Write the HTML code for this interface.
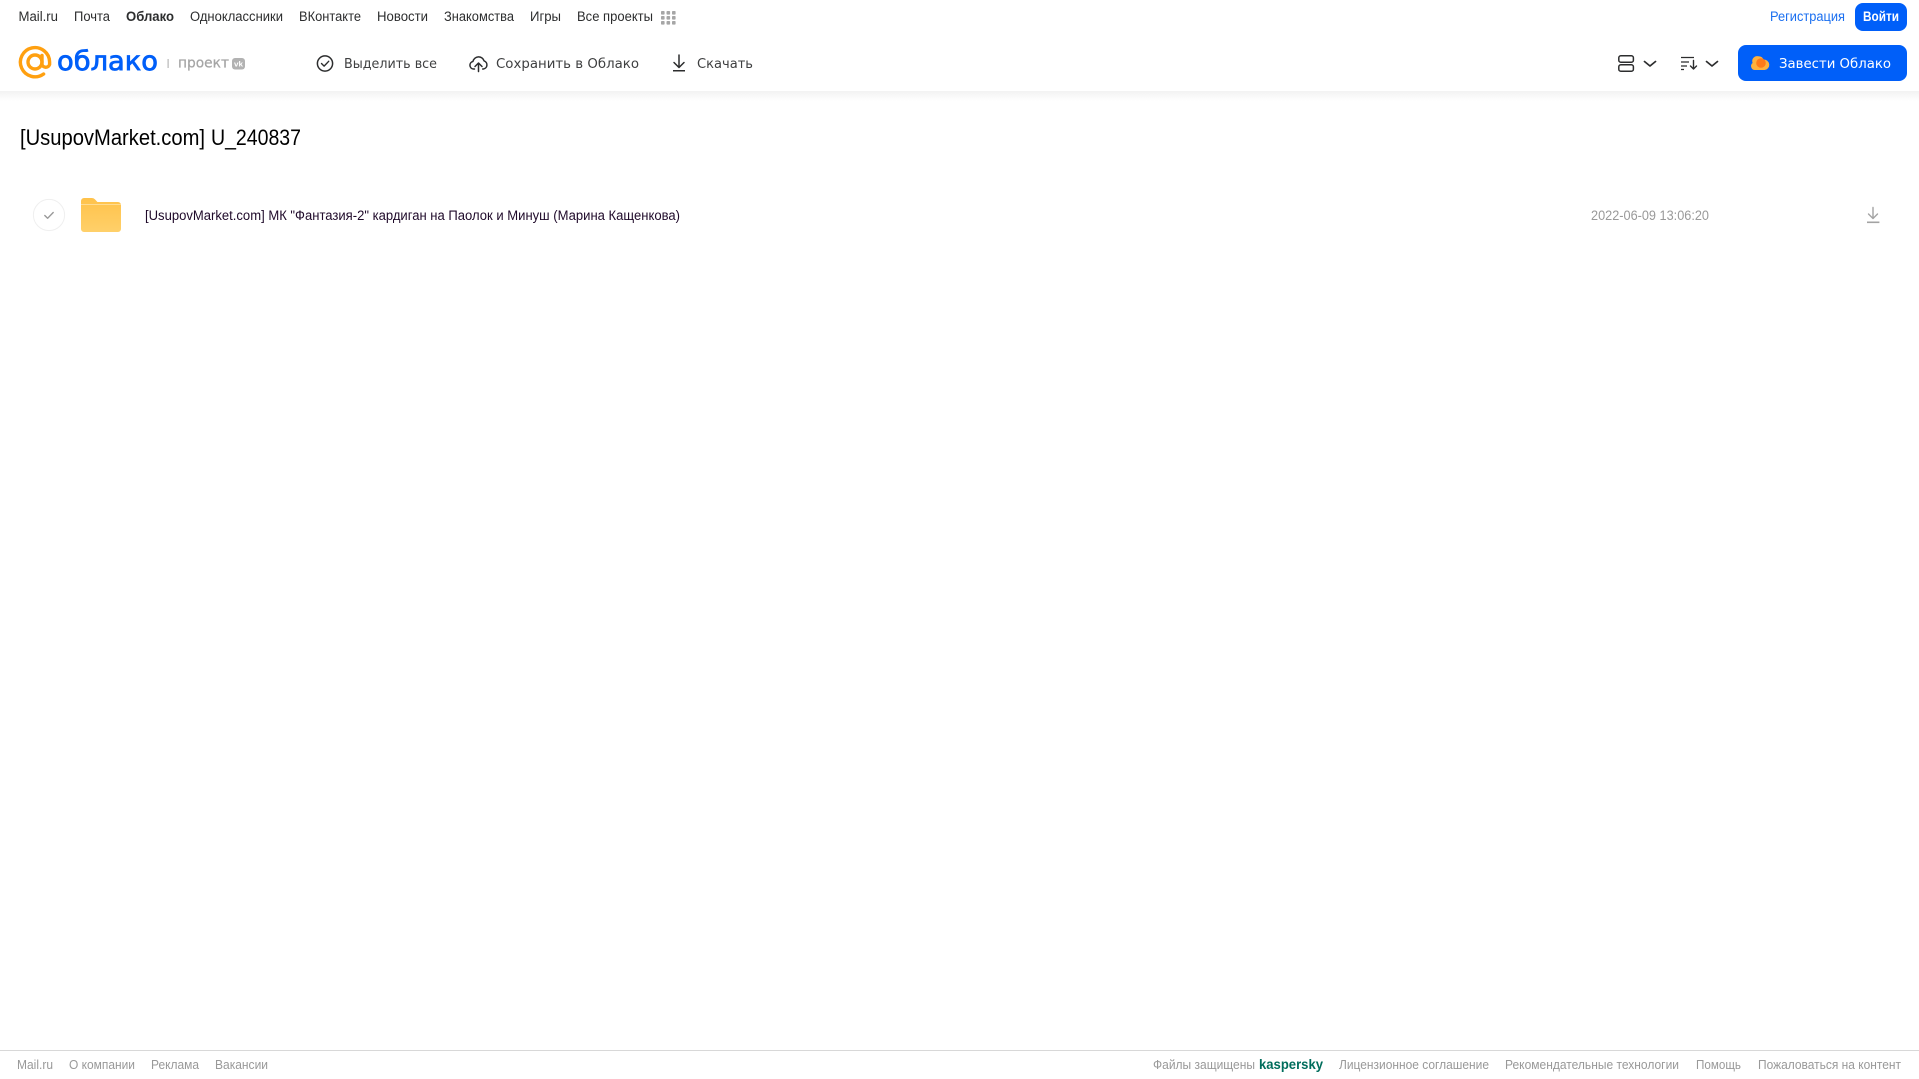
<!DOCTYPE html>
<html lang="ru">
<head>
<meta charset="utf-8">
<title>[UsupovMarket.com] U_240837</title>
<style>
html,body{margin:0;padding:0;width:1919px;height:1079px;background:#fff;overflow:hidden}
svg{display:block;position:absolute;left:0;top:0}
text{font-family:"Liberation Sans",sans-serif;white-space:pre}
.n{font-size:13.5px;fill:#2c2d2e}
.t{font-family:"DejaVu Sans","Liberation Sans",sans-serif;font-size:13.5px;fill:#3f4041}
.f{font-size:12.5px;fill:#999}
</style>
</head>
<body>
<svg width="1919" height="1079" viewBox="0 0 1919 1079" xmlns="http://www.w3.org/2000/svg">
<defs>
<linearGradient id="sh" x1="0" y1="0" x2="0" y2="1"><stop offset="0" stop-color="#f2f2f2"/><stop offset="1" stop-color="#fff"/></linearGradient>
<linearGradient id="fo" x1="0" y1="0" x2="0" y2="1"><stop offset="0" stop-color="#ffc24a"/><stop offset="1" stop-color="#ffd06a"/></linearGradient>
</defs>

<!-- top nav -->
<g class="nav">
<text class="n" x="18.5" y="21" textLength="39.5" lengthAdjust="spacingAndGlyphs">Mail.ru</text>
<text class="n" x="74" y="21" textLength="36" lengthAdjust="spacingAndGlyphs">Почта</text>
<text class="n" x="126" y="21" textLength="48" lengthAdjust="spacingAndGlyphs" font-weight="700">Облако</text>
<text class="n" x="190" y="21" textLength="93" lengthAdjust="spacingAndGlyphs">Одноклассники</text>
<text class="n" x="299" y="21" textLength="62" lengthAdjust="spacingAndGlyphs">ВКонтакте</text>
<text class="n" x="377" y="21" textLength="51" lengthAdjust="spacingAndGlyphs">Новости</text>
<text class="n" x="444" y="21" textLength="70" lengthAdjust="spacingAndGlyphs">Знакомства</text>
<text class="n" x="530" y="21" textLength="31" lengthAdjust="spacingAndGlyphs">Игры</text>
<text class="n" x="577" y="21" textLength="76" lengthAdjust="spacingAndGlyphs">Все проекты</text>
<g fill="#a6a6a6">
<rect x="661" y="11" width="3.6" height="3.6" rx=".8"/><rect x="666.5" y="11" width="3.6" height="3.6" rx=".8"/><rect x="672" y="11" width="3.6" height="3.6" rx=".8"/>
<rect x="661" y="16" width="3.6" height="3.6" rx=".8"/><rect x="666.5" y="16" width="3.6" height="3.6" rx=".8"/><rect x="672" y="16" width="3.6" height="3.6" rx=".8"/>
<rect x="661" y="21" width="3.6" height="3.6" rx=".8"/><rect x="666.5" y="21" width="3.6" height="3.6" rx=".8"/><rect x="672" y="21" width="3.6" height="3.6" rx=".8"/>
</g>
<text x="1770" y="21" font-size="13.5" fill="#1a6ff0" textLength="75" lengthAdjust="spacingAndGlyphs">Регистрация</text>
<rect x="1855" y="3" width="52" height="28" rx="8" fill="#005ff9"/>
<text x="1863" y="21" font-size="13.5" font-weight="700" fill="#fff" textLength="36" lengthAdjust="spacingAndGlyphs">Войти</text>
</g>

<!-- logo -->
<g fill="none" stroke="#ffa010" stroke-width="3.4" stroke-linecap="round">
<circle cx="35" cy="62" r="7"/>
<path d="M42 55.5V64.5a4 4 0 0 0 7.6 0V62a14.6 14.6 0 1 0-6 12"/>
</g>
<text x="57" y="70" style="font-family:'DejaVu Sans','Liberation Sans',sans-serif" font-size="27" fill="#005ff9" stroke="#005ff9" stroke-width=".8" textLength="101" lengthAdjust="spacingAndGlyphs">облако</text>
<rect x="167.6" y="59" width="1" height="9" fill="#aaa"/>
<text x="178" y="67.5" style="font-family:'DejaVu Sans','Liberation Sans',sans-serif" font-size="14" fill="#a5a5a5" stroke="#a5a5a5" stroke-width=".25" textLength="51" lengthAdjust="spacingAndGlyphs">проект</text>
<rect x="232" y="58" width="13" height="11.5" rx="3" fill="#b2b2b2"/>
<text x="234" y="66.5" font-size="7.5" font-weight="700" fill="#fff" textLength="9" lengthAdjust="spacingAndGlyphs">vk</text>

<!-- toolbar -->
<circle cx="325" cy="63.5" r="7.6" fill="none" stroke="#2c2d2e" stroke-width="1.5"/>
<path d="M321.5 63.5l2.6 2.6 4.6-4.8" fill="none" stroke="#2c2d2e" stroke-width="1.4" stroke-linecap="round" stroke-linejoin="round"/>
<text class="t" x="344" y="68" textLength="93" lengthAdjust="spacingAndGlyphs">Выделить все</text>

<path d="M474.5 69h-1a3.8 3.8 0 0 1-.6-7.5 5.8 5.8 0 0 1 11.2-.6 4.2 4.2 0 0 1-.6 8.1h-.8" fill="none" stroke="#2c2d2e" stroke-width="1.5" stroke-linecap="round" stroke-linejoin="round"/>
<path d="M478.5 71.5v-8M475 66.5l3.5-3.5 3.5 3.5" fill="none" stroke="#2c2d2e" stroke-width="1.5" stroke-linecap="round" stroke-linejoin="round"/>
<text class="t" x="496" y="68" textLength="143" lengthAdjust="spacingAndGlyphs">Сохранить в Облако</text>

<path d="M679 55v12M674 62.5l5 5 5-5" fill="none" stroke="#2c2d2e" stroke-width="1.5" stroke-linecap="round" stroke-linejoin="round"/>
<rect x="673" y="70" width="12" height="1.5" fill="#2c2d2e"/>
<text class="t" x="697" y="68" textLength="56" lengthAdjust="spacingAndGlyphs">Скачать</text>

<!-- view icons -->
<g fill="none" stroke="#2c2d2e" stroke-width="1.5">
<rect x="1618.8" y="55.8" width="14.6" height="6.4" rx="2"/>
<rect x="1618.8" y="64.8" width="14.6" height="6.4" rx="2"/>
</g>
<path d="M1644.5 61.5l5.5 4.5 5.5-4.5" fill="none" stroke="#2c2d2e" stroke-width="1.7" stroke-linecap="round" stroke-linejoin="round"/>
<path d="M1681 57.5h13M1681 62h8M1681 66h6M1681 69.5h3" fill="none" stroke="#2c2d2e" stroke-width="1.2"/>
<path d="M1693.5 60.5v8.5M1690.5 66l3 3 3-3" fill="none" stroke="#2c2d2e" stroke-width="1.4" stroke-linecap="round" stroke-linejoin="round"/>
<path d="M1706.5 61.5l5.5 4.5 5.5-4.5" fill="none" stroke="#2c2d2e" stroke-width="1.7" stroke-linecap="round" stroke-linejoin="round"/>

<rect x="1738" y="45" width="169" height="36" rx="8" fill="#005ff9"/>
<path d="M1755 70a3.9 3.9 0 0 1-2.4-7 5 5 0 0 1 6-6.7 5.5 5.5 0 0 1 5 3.4 4.5 4.5 0 0 1 1 10.3z" fill="#ffb13d"/>
<circle cx="1761" cy="63" r="4.8" fill="#ff7a1a"/>
<text x="1779" y="68" style="font-family:'DejaVu Sans','Liberation Sans',sans-serif" font-size="13.5" fill="#fff" textLength="112" lengthAdjust="spacingAndGlyphs">Завести Облако</text>

<!-- header shadow -->
<rect x="0" y="91" width="1919" height="10" fill="url(#sh)"/>

<!-- content -->
<text x="20" y="145" font-size="22.5" fill="#000" textLength="185" lengthAdjust="spacingAndGlyphs">[UsupovMarket.com]</text>
<text x="211" y="145" font-size="22.5" fill="#000" textLength="90" lengthAdjust="spacingAndGlyphs">U_240837</text>

<circle cx="49" cy="215" r="15.6" fill="#fff" stroke="#efefef" stroke-width="1"/>
<path d="M44.8 215.5l2.8 2.8 5.6-5.8" fill="none" stroke="#999" stroke-width="1.4" stroke-linecap="round" stroke-linejoin="round"/>
<path d="M81 201a3 3 0 0 1 3-3h8a4 4 0 0 1 3 1.4l2.4 2.6H118a3 3 0 0 1 3 3v24a3 3 0 0 1-3 3H84a3 3 0 0 1-3-3z" fill="url(#fo)"/>
<rect x="81" y="204" width="40" height="1" fill="#ffdc92"/>

<text x="145" y="220" font-size="13.5" fill="#1f0a2a" textLength="535" lengthAdjust="spacingAndGlyphs">[UsupovMarket.com] МК "Фантазия-2" кардиган на Паолок и Минуш (Марина Кащенкова)</text>
<text x="1591" y="220" font-size="13.5" fill="#999" textLength="118" lengthAdjust="spacingAndGlyphs">2022-06-09 13:06:20</text>
<path d="M1873 207.5v11M1868.5 214l4.5 4.5 4.5-4.5" fill="none" stroke="#a3a3a3" stroke-width="1.4" stroke-linecap="round" stroke-linejoin="round"/>
<rect x="1867" y="221.5" width="12.4" height="1.6" fill="#a3a3a3"/>

<!-- footer -->
<rect x="0" y="1050" width="1919" height="1" fill="#d8d8d8"/>
<text class="f" x="17" y="1069" textLength="36" lengthAdjust="spacingAndGlyphs">Mail.ru</text>
<text class="f" x="69" y="1069" textLength="66" lengthAdjust="spacingAndGlyphs">О компании</text>
<text class="f" x="151" y="1069" textLength="48" lengthAdjust="spacingAndGlyphs">Реклама</text>
<text class="f" x="215" y="1069" textLength="53" lengthAdjust="spacingAndGlyphs">Вакансии</text>
<text class="f" x="1153" y="1069" textLength="102" lengthAdjust="spacingAndGlyphs">Файлы защищены</text>
<text x="1259" y="1069" font-size="13.5" font-weight="700" fill="#006d5c" textLength="64" lengthAdjust="spacingAndGlyphs">kaspersky</text>
<text class="f" x="1339" y="1069" textLength="150" lengthAdjust="spacingAndGlyphs">Лицензионное соглашение</text>
<text class="f" x="1505" y="1069" textLength="174" lengthAdjust="spacingAndGlyphs">Рекомендательные технологии</text>
<text class="f" x="1696" y="1069" textLength="45" lengthAdjust="spacingAndGlyphs">Помощь</text>
<text class="f" x="1758" y="1069" textLength="143" lengthAdjust="spacingAndGlyphs">Пожаловаться на контент</text>
</svg>
</body>
</html>
